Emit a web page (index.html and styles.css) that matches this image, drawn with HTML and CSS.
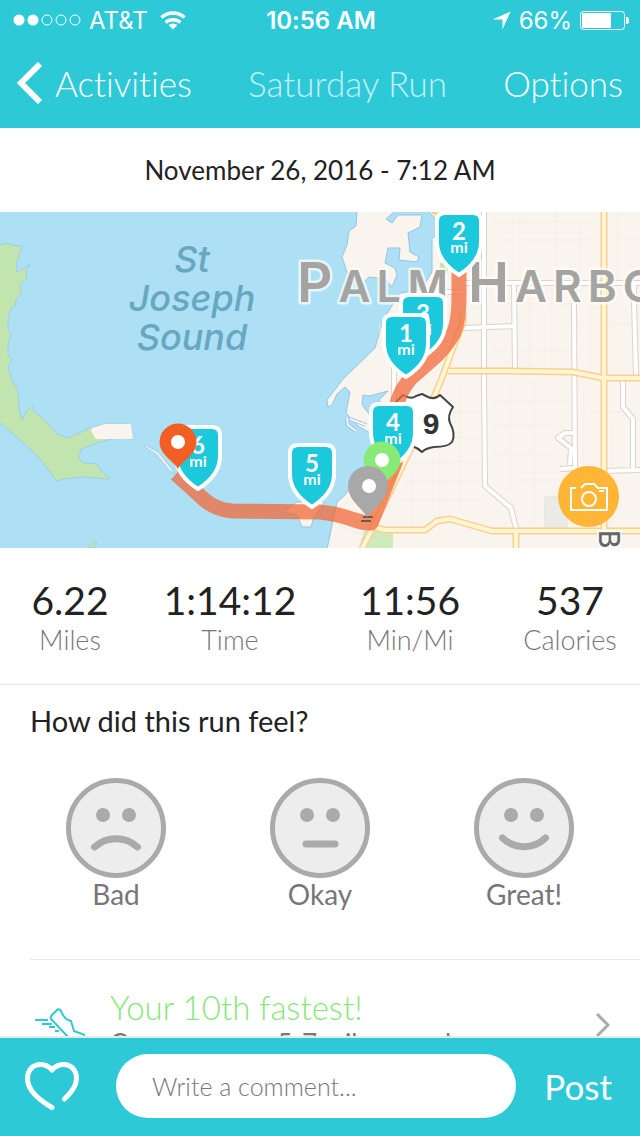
FILE: index.html
```html
<!DOCTYPE html>
<html lang="en">
<head>
    <meta charset="utf-8">
    <meta name="viewport" content="width=device-width, initial-scale=1">
    <title>Saturday Run</title>
    <link rel="stylesheet" href="styles.css">
</head>
<body>
    <header class="header">
        <div class="status-bar">
            <div class="status-left">
                <svg width="68" height="12" viewBox="0 0 68 12" fill="none" stroke="#fff">
                    <circle cx="6" cy="6" r="5.5" fill="#fff" stroke="none"/>
                    <circle cx="20" cy="6" r="5.5" fill="#fff" stroke="none"/>
                    <circle cx="34" cy="6" r="5"/>
                    <circle cx="48" cy="6" r="5"/>
                    <circle cx="62" cy="6" r="5"/>
                </svg>
                <span>AT&amp;T</span>
                <svg class="wifi" width="26" height="19" viewBox="0 0 26 19" fill="none" stroke="#fff" stroke-width="3.5">
                    <path d="M1.500 6.500a17 17 0 0 1 23 0"/>
                    <path d="M5.600 11.500a11 11 0 0 1 14.800 0"/>
                    <path d="M13 18.500l-4.400-4.400a6.500 6.500 0 0 1 8.800 0z" fill="#fff" stroke="none"/>
                </svg>
            </div>
            <span class="clock">10:56 AM</span>
            <div class="status-right">
                <svg class="location" width="19" height="19" viewBox="0 0 19 19"><path d="M18.500 .5L10.500 18.500V8.500H.5z" fill="#fff"/></svg>
                <span>66%</span>
                <svg width="49" height="19" viewBox="0 0 49 19">
                    <rect x=".5" y=".5" width="44" height="18" rx="3" fill="none" stroke="#fff"/>
                    <rect x="2" y="2" width="29" height="15" rx="1" fill="#fff"/>
                    <path d="M46 6h1q2 0 2 3.500t-2 3.500h-1z" fill="#fff"/>
                </svg>
            </div>
        </div>
        <nav class="nav">
            <a class="back" href="#">
                <svg width="26" height="42" viewBox="0 0 26 42" fill="none" stroke="#fff" stroke-width="6"><path d="M23 2L4 21l19 19"/></svg>
                Activities
            </a>
            <h1>Saturday Run</h1>
            <button class="options" type="button">Options</button>
        </nav>
    </header>

    <main class="content">
        <p class="date">November 26, 2016 - 7:12 AM</p>

        <section class="map">
            <svg class="map-drawing" viewBox="0 0 640 336" role="img" aria-label="Route map">
                <defs>
                    <path id="shield" d="M-14-62H14Q22-62 22-54V-33C22-18 11-7 0 0C-11-7-22-18-22-33V-54Q-22-62-14-62Z" fill="#1cc8db" stroke="#fff" stroke-width="4"/>
                    <path id="pin" d="M0 27C-3 20-18.500 13-18.500 0A18.500 18.500 0 0 1 18.500 0C18.500 13 3 20 0 27Z"/>
                </defs>

                <!-- water -->
                <rect width="640" height="336" fill="#ade0f5"/>

                <!-- barrier island -->
                <g stroke="#9fcfe4" stroke-width="1">
                    <path fill="#c2e5b0" d="M-1 34L5 31L22 35L17 50L16 60L27 55L30 51L26 60L27 66L20 73L22 80L16 88L15 95L12 95L8 106V119L12 122L8 130V144L13 147L8 154L12 168L18 178L19 196L22 208L26 200L33 194L34 200L45 208L57 222L68 226L90 216L105 212L131 212L133 227L117 226L100 230L81 237L79 246L83 251L97 252L101 259L109 265V267L83 265L63 267L57 269L40 247L17 225L-1 210Z"/>
                    <path fill="#f9f4ed" stroke="none" d="M92 216L105 212H131L133 227H96L91 219Z"/>
                    <path fill="#c2e5b0" d="M88 336L92 330H97L93 336Z"/>
                    <path fill="#f9f4ed" d="M145 233L158 240L175 261L170 259L156 242L145 235Z"/>
                </g>

                <!-- mainland -->
                <g fill="#f9f4ed" stroke="#93c5e6" stroke-width="1">
                    <path d="M428-1L435 6L438 22L432 26V60L421 78L400 81L383 108L375 136L343 167L327 188L328 195L332 193L337 182L345 175L350 180L346 201L358 214L372 222V258L357 268L345 283L337 290L327 337H641V-1Z"/>
                    <path d="M357-1L356 14L349 19L347 33L342 45L347 60L363 71L369 65L385 67L392 75L397 63L395 56L385 51L388 36H400L399 48L417 50L419 45L410 40L408 21L420 15L422 3L398 3L392 11L386 7L395-1Z"/>
                    <path d="M284 300L297 290H325L314 305L311 315H302L297 303Z"/>
                </g>
                <path fill="#ade0f5" stroke="#93c5e6" d="M363 183L370 184L388 179L379 188L383 193L370 203L362 193Z"/>
                <path fill="none" stroke="#93c5e6" stroke-width="4" d="M347 206L348 213L356 219M350 207L366 213"/>
                <path fill="none" stroke="#f9f4ed" stroke-width="2" d="M347 206L348 213L356 219M350 207L366 213"/>
                <path fill="#c2e5b0" d="M440 51h8v10h-8z"/>
                <path fill="#d0ebbb" d="M364 319h29v17h-34z"/>
                <path fill="#eaeae7" stroke="#e0dfdb" d="M545 285h22v31h-22z"/>

                <!-- side streets -->
                <path fill="none" stroke="#f3ede5" d="M494 10H596M500 28H590M520 4V66M556 0V66M580 12V68M612 26H640M618 0V66M494 92H570M530 72V156M552 76V156M590 74V160M494 138H570M612 112H640M460 176V300M430 200H480M425 226H480M410 250H480M406 270H480M440 222V310M494 190H570M510 170V280M534 168V314M494 214H556M494 242H556M520 268H598M584 174V250M590 200H620M612 210V254M610 270V314M400 288H480M412 262V314M352 322H362M340 314L365 324M380 112V132M378 134L404 146"/>

                <!-- white roads -->
                <g fill="none" stroke-linejoin="round">
                    <path stroke="#dad3cb" stroke-width="6" d="M484 0V168L485 274L511 296L516 316M464 71H640M514 71L515 160M463 116L514 114M574 72V90L575 256L560 257M575 221H565L558 226L571 236L570 253M634 72V90L636 163M623 168V195L633 207V258M603 259L640 258M435 80H462M445 132H455M394 150V190"/>
                    <path stroke="#fff" stroke-width="4" d="M484 0V168L485 274L511 296L516 316M464 71H640M514 71L515 160M463 116L514 114M574 72V90L575 256L560 257M575 221H565L558 226L571 236L570 253M634 72V90L636 163M623 168V195L633 207V258M603 259L640 258M435 80H462M445 132H455M394 150V190"/>
                </g>

                <!-- highways -->
                <g fill="none" stroke-linejoin="round">
                    <path stroke="#fbcf94" stroke-width="7" d="M604 0V319M448 159H507L573 160L603 166L640 166M463 100V110L453 136L442 166L423 211L402 255L373 315L362 337M433-2L450 8M373 315L385 318H425L437 309L450 307L492 319H640M516 319V337"/>
                    <path stroke="#fdf6cf" stroke-width="4" d="M604 0V319M448 159H507L573 160L603 166L640 166M463 100V110L453 136L442 166L423 211L402 255L373 315L362 337M373 315L385 318H425L437 309L450 307L492 319H640M516 319V337"/>
                </g>

                <!-- place names -->
                <g class="water-name">
                    <text x="192" y="60">St</text>
                    <text x="192" y="99">Joseph</text>
                    <text x="192" y="138">Sound</text>
                </g>
                <text class="town" x="297" y="90"><tspan class="town-cap">P</tspan>ALM</text>
                <text class="town" x="468" y="90"><tspan class="town-cap">H</tspan>ARBOR</text>
                <text class="road-name" transform="translate(599 318) rotate(90)">B</text>

                <!-- US 19 shield -->
                <path fill="#fff" stroke="#444" stroke-width="2" stroke-linejoin="round" d="M397 189L403 183Q411 188 416 184L422 182L428 185Q435 188 440 183L453 195Q447 204 450 211Q456 222 452 230Q448 235 434 235Q426 236 422 240Q418 236 412 234Q397 236 393 228Q391 220 395 210Q397 203 391 196Z"/>
                <text class="highway" x="431" y="222">9</text>

                <!-- run route -->
                <path fill="none" stroke="#f26a3c" stroke-opacity=".76" stroke-width="15" stroke-linejoin="round" d="M459 58V85C459 120 452 126 437 143L412 165C400 178 396 190 395 207V251L371 311C358 312 350 303 320 300L233 299C215 298 205 289 197 281L176 262"/>
                <path stroke="#6c5c4c" stroke-width="2" d="M363 305h10M361 309h10"/>

                <!-- mile markers -->
                <g class="mile" transform="translate(459 63)"><use href="#shield"/><text class="mile-number" y="-35">2</text><text y="-22">mi</text></g>
                <g class="mile" transform="translate(423 145)"><use href="#shield"/><text class="mile-number" y="-35">3</text><text y="-22">mi</text></g>
                <g class="mile" transform="translate(406 165)"><use href="#shield"/><text class="mile-number" y="-35">1</text><text y="-22">mi</text></g>
                <g class="mile" transform="translate(393 254)"><use href="#shield"/><text class="mile-number" y="-35">4</text><text y="-22">mi</text></g>
                <g class="mile" transform="translate(312 295)"><use href="#shield"/><text class="mile-number" y="-35">5</text><text y="-22">mi</text></g>
                <g class="mile" transform="translate(198 277)"><use href="#shield"/><text class="mile-number" y="-35">6</text><text y="-22">mi</text></g>

                <!-- finish, start and snapshot pins -->
                <g transform="translate(178 230)"><use href="#pin" fill="#f15f25"/><circle r="7" fill="#fff"/></g>
                <g transform="translate(382 248)"><use href="#pin" fill="#8aea78"/><circle r="7" fill="#fff"/></g>
                <path fill="#a8a8a8" d="M367 305C362 296 348 288 348 274A20 20 0 0 1 388 274C388 288 372 298 367 305Z"/>
                <circle cx="369" cy="274" r="7" fill="#fff"/>
            </svg>
            <button class="camera" type="button" aria-label="Add photo">
                <svg width="40" height="30" viewBox="0 0 40 30" fill="none" stroke="#fff" stroke-width="2">
                    <path d="M7 6H2V28H38V6H29L25 2H16L12 6"/>
                    <circle cx="20" cy="17" r="7"/>
                    <path d="M30 9h5"/>
                </svg>
            </button>
        </section>

        <dl class="stats">
            <div><dd>6.22</dd><dt>Miles</dt></div>
            <div><dd>1:14:12</dd><dt>Time</dt></div>
            <div><dd>11:56</dd><dt>Min/Mi</dt></div>
            <div><dd>537</dd><dt>Calories</dt></div>
        </dl>

        <section class="feel">
            <h2>How did this run feel?</h2>
            <div class="faces">
                <button class="face" type="button">
                    <svg width="100" height="100" viewBox="0 0 100 100">
                        <circle class="head" cx="50" cy="50" r="47.500"/>
                        <circle class="eye" cx="37" cy="37" r="7"/>
                        <circle class="eye" cx="63" cy="37" r="7"/>
                        <path class="mouth" d="M28.500 69A32 32 0 0 1 71.500 69"/>
                    </svg>
                    Bad
                </button>
                <button class="face" type="button">
                    <svg width="100" height="100" viewBox="0 0 100 100">
                        <circle class="head" cx="50" cy="50" r="47.500"/>
                        <circle class="eye" cx="37" cy="37" r="7"/>
                        <circle class="eye" cx="63" cy="37" r="7"/>
                        <path class="mouth" d="M36 66H65"/>
                    </svg>
                    Okay
                </button>
                <button class="face" type="button">
                    <svg width="100" height="100" viewBox="0 0 100 100">
                        <circle class="head" cx="50" cy="50" r="47.500"/>
                        <circle class="eye" cx="37" cy="37" r="7"/>
                        <circle class="eye" cx="63" cy="37" r="7"/>
                        <path class="mouth" d="M28.500 60A31 31 0 0 0 71.500 60"/>
                    </svg>
                    Great!
                </button>
            </div>
        </section>

        <a class="achievement" href="#">
            <svg width="50" height="34" viewBox="0 0 50 34" fill="none" stroke="#2dc9d7" stroke-width="2" stroke-linejoin="round">
                <path d="M36 32L16 11Q15 9 17 7L22 2Q24 0 26 3Q28 9 33 12L36 13L39 23L50 27V32Z"/>
                <path d="M0 12H13M7 16H17M14 19H20M20 23H24"/>
            </svg>
            <span class="achievement-text">
                <strong>Your 10th fastest!</strong>
                <span>Compare your 5-7 mile record</span>
            </span>
            <svg width="14" height="24" viewBox="0 0 14 24" fill="none" stroke="#aaa" stroke-width="3"><path d="M1 1L12 12L1 23"/></svg>
        </a>
    </main>

    <form class="comment-bar">
        <button class="like" type="button" aria-label="Like">
            <svg width="54" height="48" viewBox="0 0 54 48" fill="none" stroke="#fff" stroke-width="5" stroke-linecap="round" stroke-linejoin="round">
                <path d="M27 45.500C14 38 2.500 28 2.500 16.500C2.500 8 8 2.500 15.500 2.500C21 2.500 24 4.500 27 8C30 4.500 33 2.500 38.500 2.500C46 2.500 51.500 8 51.500 16.500C51.500 24 46 31 39.500 37"/>
            </svg>
        </button>
        <input type="text" placeholder="Write a comment..." aria-label="Comment">
        <button class="post" type="submit">Post</button>
    </form>
</body>
</html>
```

FILE: styles.css
```css
* {
    box-sizing: border-box;
}

body {
    display: flex;
    flex-direction: column;
    height: 100vh;
    margin: 0;
    background: #fff;
    color: #222;
    font-family: Lato, "Open Sans", sans-serif;
    font-variant-ligatures: none;
}

svg {
    display: block;
    flex-shrink: 0;
}

h1, h2, p, dl, dd {
    margin: 0;
}

button {
    padding: 0;
    border: 0;
    background: none;
    color: inherit;
    font: inherit;
    font-variant-ligatures: none;
    cursor: pointer;
}

a {
    color: inherit;
    text-decoration: none;
}

/* top bar */
.header {
    flex-shrink: 0;
    background: #2dc9d7;
    color: #fff;
}

.status-bar {
    display: grid;
    grid-template-columns: 1fr auto 1fr;
    align-items: center;
    height: 40px;
    padding: 0 11px 0 13px;
    font-family: Inter, sans-serif;
    font-size: 24px;
}

.status-left,
.status-right {
    display: flex;
    align-items: center;
    gap: 8px;
}

.status-right {
    justify-content: flex-end;
}

.wifi {
    margin-left: 4px;
}

.clock {
    font-weight: 600;
}

.nav {
    display: flex;
    align-items: center;
    justify-content: space-between;
    height: 88px;
    padding: 0 17px 2px;
    font-size: 35px;
    font-weight: 300;
}

.back {
    display: flex;
    align-items: center;
    gap: 12px;
}

.nav h1 {
    font-size: 35px;
    font-weight: 300;
    opacity: .7;
}

.content {
    flex: 1;
    min-height: 0;
    overflow: hidden;
}

.date {
    line-height: 84px;
    font-size: 26px;
    text-align: center;
}

.map {
    position: relative;
}

.map-drawing {
    width: 100%;
    height: auto;
}

.water-name {
    fill: #68a7c0;
    font: italic 500 36px Inter, sans-serif;
    text-anchor: middle;
}

.town {
    fill: #a5a4a0;
    stroke: #fff;
    stroke-opacity: .7;
    stroke-width: 5px;
    stroke-linejoin: round;
    paint-order: stroke;
    font: 600 44px Inter, sans-serif;
    letter-spacing: 6px;
}

.town-cap {
    font-size: 55px;
}

.road-name {
    fill: #666;
    stroke: #fff;
    stroke-width: 3px;
    paint-order: stroke;
    font: 500 28px Inter, sans-serif;
}

.highway {
    fill: #333;
    font: 700 30px "Liberation Sans", sans-serif;
    text-anchor: middle;
}

.mile text {
    fill: #fff;
    font-size: 16px;
    font-weight: 700;
    text-anchor: middle;
}

.mile .mile-number {
    font-size: 24px;
}

.camera {
    position: absolute;
    right: 21px;
    bottom: 21px;
    display: flex;
    align-items: center;
    justify-content: center;
    width: 61px;
    height: 61px;
    border-radius: 50%;
    background: #ffb535;
}

.stats {
    display: grid;
    grid-template-columns: 7fr 9fr 9fr 7fr;
    padding: 28px 0;
    border-bottom: 1px solid #e8e8e8;
    text-align: center;
}

.stats div {
    display: flex;
    flex-direction: column;
}

.stats dd {
    font-size: 39px;
    line-height: 48px;
}

.stats dt {
    color: #777;
    font-size: 27px;
    font-weight: 300;
    line-height: 32px;
}

.feel {
    padding-top: 20px;
}

.feel h2 {
    padding-left: 30px;
    font-size: 29px;
    font-weight: 400;
    line-height: 32px;
}

.faces {
    display: grid;
    grid-template-columns: repeat(3, 1fr);
    padding: 41px 14px 48px;
}

.face {
    display: flex;
    flex-direction: column;
    align-items: center;
    color: #777;
    font-size: 28px;
    line-height: 33px;
}

.head {
    fill: #ededed;
    stroke: #aaa;
    stroke-width: 5px;
}

.eye {
    fill: #aaa;
}

.mouth {
    fill: none;
    stroke: #aaa;
    stroke-width: 7px;
    stroke-linecap: round;
}

.achievement {
    display: flex;
    align-items: center;
    gap: 25px;
    height: 130px;
    margin-left: 30px;
    padding: 0 30px 0 5px;
    border-top: 1px solid #e8e8e8;
}

.achievement-text {
    display: flex;
    flex: 1;
    flex-direction: column;
    gap: 4px;
    color: #777;
    font-size: 26px;
    line-height: 32px;
}

.achievement strong {
    color: #8ae67a;
    font-size: 33px;
    font-weight: 300;
}

/* comment bar */
.comment-bar {
    display: flex;
    flex-shrink: 0;
    align-items: center;
    padding: 16px 28px 18px 25px;
    border-top: 2px solid #e8e8e8;
    background: #2dc9d7;
    color: #fff;
}

.comment-bar input {
    flex: 1;
    min-width: 0;
    height: 64px;
    margin: 0 28px 0 37px;
    padding: 0 36px;
    border: 0;
    border-radius: 32px;
    background: #fff;
    color: #222;
    font: 300 25px Lato, sans-serif;
}

.comment-bar input::placeholder {
    color: #777;
}

.post {
    font-size: 35px;
}
```
